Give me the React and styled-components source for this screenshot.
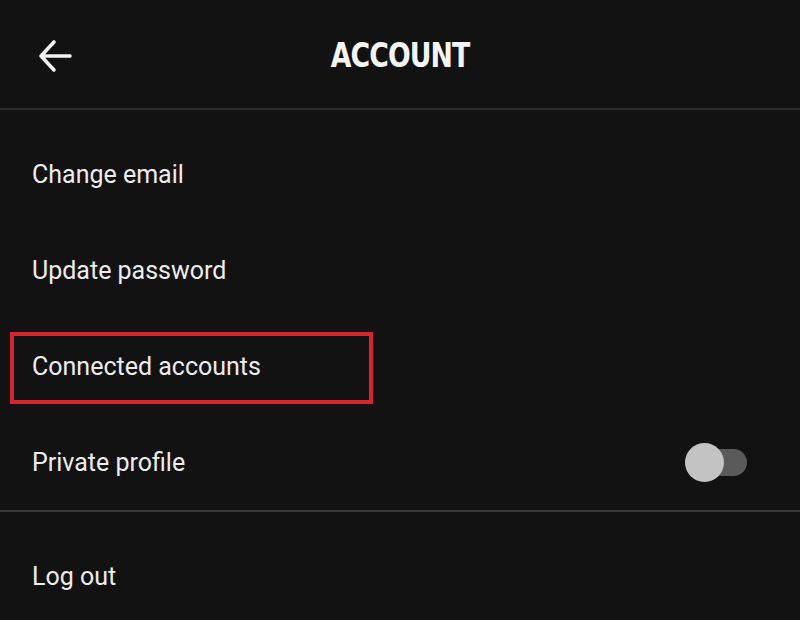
import React from "react";
import styled, { createGlobalStyle } from "styled-components";

const Global = createGlobalStyle`
  html, body {
    margin: 0;
    padding: 0;
    background: #121212;
  }
  body {
    font-family: Roboto, "Noto Sans", sans-serif;
    color: #ececec;
  }
`;

const Screen = styled.div`
  width: 800px;
  height: 620px;
  overflow: hidden;
  background: #121212;
`;

const Header = styled.header`
  position: relative;
  height: 108px;
  display: flex;
  align-items: center;
  justify-content: center;
  border-bottom: 2px solid #2b2b2b;
`;

const BackButton = styled.button`
  position: absolute;
  left: 36px;
  top: 38px;
  width: 38px;
  height: 36px;
  padding: 0;
  border: 0;
  background: none;
  display: flex;
  align-items: center;
  justify-content: center;
`;

const Title = styled.h1`
  margin: 0;
  font-family: "DejaVu Sans Condensed", "DejaVu Sans", sans-serif;
  font-weight: 700;
  font-size: 33px;
  letter-spacing: -1px;
  color: #f4f4f4;
  transform: scaleX(0.9) translateY(1px);
`;

const List = styled.div`
  padding-top: 16px;
`;

const Row = styled.div`
  position: relative;
  height: 96px;
  display: flex;
  align-items: center;
  justify-content: space-between;
  padding: 0 53px 0 32px;
  font-size: 25px;
  letter-spacing: 0;
`;

const Divider = styled.div`
  height: 2px;
  background: #383838;
`;

const Highlight = styled.div`
  position: absolute;
  left: 10px;
  top: 14px;
  width: 363px;
  height: 72px;
  box-sizing: border-box;
  border: 4px solid #d3262f;
  pointer-events: none;
`;

const Track = styled.div`
  position: relative;
  width: 56px;
  height: 27px;
  border-radius: 14px;
  background: #5a5a5a;
`;

const Thumb = styled.div`
  position: absolute;
  left: -6px;
  top: -6px;
  width: 39px;
  height: 39px;
  border-radius: 50%;
  background: #c3c3c3;
`;

const BackArrow = () => (
  <svg width="36" height="34" viewBox="0 0 36 34" fill="none">
    <path
      d="M33 17H5M17 3L4 17l13 14"
      stroke="#f2f2f2"
      strokeWidth="3.6"
      strokeLinecap="round"
      strokeLinejoin="round"
    />
  </svg>
);

const Toggle = () => (
  <Track>
    <Thumb />
  </Track>
);

const App = () => {
  return (
    <Screen>
      <Global />
      <Header>
        <BackButton aria-label="Back">
          <BackArrow />
        </BackButton>
        <Title>ACCOUNT</Title>
      </Header>
      <List>
        <Row>Change email</Row>
        <Row>Update password</Row>
        <Row>
          Connected accounts
          <Highlight />
        </Row>
        <Row>
          Private profile
          <Toggle />
        </Row>
      </List>
      <Divider />
      <List>
        <Row>Log out</Row>
      </List>
    </Screen>
  );
};

export default App;
